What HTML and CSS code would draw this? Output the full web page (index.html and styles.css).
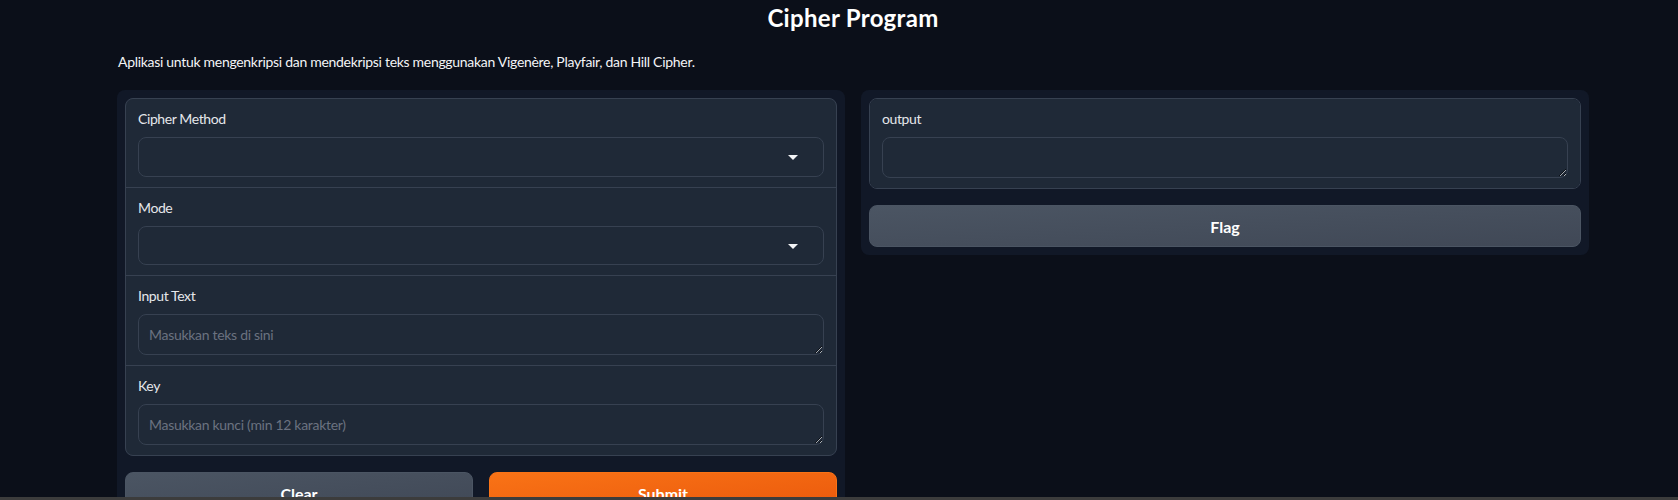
FILE: index.html
```html
<!DOCTYPE html>
<html lang="id">
<head>
<meta charset="utf-8">
<title>Cipher Program</title>
<link rel="stylesheet" href="styles.css">
</head>
<body>
<div class="app">
  <h1 class="title">Cipher Program</h1>
  <p class="desc">Aplikasi untuk mengenkripsi dan mendekripsi teks menggunakan Vigenère, Playfair, dan Hill Cipher.</p>
  <div class="row">
    <div class="panel">
      <div class="form">
        <div class="block">
          <span class="label">Cipher Method</span>
          <div class="dropdown"><span class="caret"></span></div>
        </div>
        <div class="block">
          <span class="label">Mode</span>
          <div class="dropdown"><span class="caret"></span></div>
        </div>
        <div class="block">
          <span class="label">Input Text</span>
          <textarea class="textbox" rows="1" placeholder="Masukkan teks di sini"></textarea>
        </div>
        <div class="block">
          <span class="label">Key</span>
          <textarea class="textbox" rows="1" placeholder="Masukkan kunci (min 12 karakter)"></textarea>
        </div>
      </div>
      <div class="buttons">
        <button class="btn secondary">Clear</button>
        <button class="btn primary">Submit</button>
      </div>
    </div>
    <div class="panel">
      <div class="form single">
        <div class="block">
          <span class="label">output</span>
          <textarea class="textbox" rows="1"></textarea>
        </div>
      </div>
      <button class="btn secondary">Flag</button>
    </div>
  </div>
</div>
<div class="hscroll"></div>
</body>
</html>
```
FILE: styles.css
```css
html, body {
  margin: 0;
  padding: 0;
  background: #0b0f19;
  overflow: hidden;
  height: 500px;
  color-scheme: dark;
}
body {
  font-family: "Lato", "Liberation Sans", sans-serif;
  color: #f3f4f6;
}
.app {
  width: 1472px;
  margin-left: 117px;
}
.title {
  margin: 0;
  padding-top: 1px;
  font-size: 24px;
  line-height: 34px;
  font-weight: 700;
  text-align: center;
  color: #ffffff;
  letter-spacing: 0.3px;
}
.desc {
  margin: 17px 0 0 1px;
  font-size: 14px;
  line-height: 20px;
  color: #f3f4f6;
  letter-spacing: -0.3px;
}
.row {
  margin-top: 18px;
  display: flex;
  gap: 16px;
  align-items: flex-start;
}
.panel {
  flex: 1;
  background: #111827;
  border-radius: 8px;
  padding: 8px;
  display: flex;
  flex-direction: column;
  gap: 16px;
}
.form {
  display: flex;
  flex-direction: column;
  gap: 1px;
  background: #374151;
  border: 1px solid #374151;
  border-radius: 8px;
  overflow: hidden;
}
.block {
  background: #1f2937;
  padding: 10px 12px;
  display: flex;
  flex-direction: column;
}
.label {
  font-size: 14px;
  line-height: 20px;
  margin-bottom: 8px;
  color: #e5e7eb;
  letter-spacing: -0.4px;
}
.dropdown {
  position: relative;
  height: 39.6px;
  box-sizing: border-box;
  border: 1px solid #374151;
  border-radius: 8px;
  background: #1f2937;
}
.caret {
  position: absolute;
  right: 25px;
  top: 17px;
  width: 0;
  height: 0;
  border-left: 5px solid transparent;
  border-right: 5px solid transparent;
  border-top: 5px solid #f3f4f6;
}
.textbox {
  display: block;
  width: 100%;
  box-sizing: border-box;
  height: 41px;
  padding: 10px;
  margin: 0;
  border: 1px solid #374151;
  border-radius: 8px;
  background: #1f2937;
  color: #f3f4f6;
  font-family: "Lato", "Liberation Sans", sans-serif;
  font-size: 14px;
  line-height: 19px;
  letter-spacing: -0.3px;
  resize: vertical;
  outline: none;
}
.textbox::placeholder {
  color: #6b7280;
}
.buttons {
  display: flex;
  gap: 16px;
}
.buttons .btn {
  flex: 1;
}
.btn {
  height: 42px;
  border-radius: 8px;
  font-family: "Lato", "Liberation Sans", sans-serif;
  font-size: 16px;
  font-weight: 700;
  color: #ffffff;
  cursor: pointer;
}
.btn.secondary {
  background: linear-gradient(to bottom right, #4b5563, #404856);
  border: 1px solid #4b5563;
}
.btn.primary {
  background: linear-gradient(to bottom right, #f97316, #ea580c);
  border: 1px solid #f97316;
}
.hscroll {
  position: fixed;
  left: 0;
  right: 0;
  bottom: 0;
  height: 3px;
  background: #3c3c3c;
}
```
